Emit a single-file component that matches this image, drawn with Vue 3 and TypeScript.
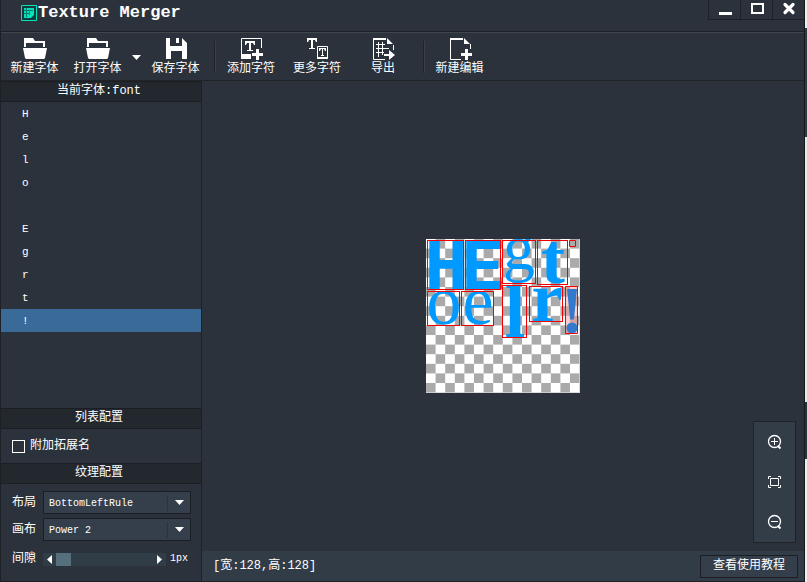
<script setup lang="ts">
import { ref } from 'vue'

interface Glyph {
  char: string
  face: string
  x: number
  y: number
  w: number
  h: number
  tx: number
  ty: number
  size: number
}

const glyphList: string[] = ['H', 'e', 'l', 'o', ' ', 'E', 'g', 'r', 't', '!']
const selected = ref(9)
const extension = ref(false)
const layout = ref('BottomLeftRule')
const canvas = ref('Power 2')
const gap = ref(1)

/* Packed glyph rectangles on the texture, in texture-view units */
const glyphs: Glyph[] = [
  { char: 'H', face: 'mono', x: 1, y: 1, w: 37, h: 50, tx: 20, ty: 50, size: 72 },
  { char: 'E', face: 'mono', x: 39, y: 1, w: 36, h: 50, tx: 57, ty: 50, size: 72 },
  { char: 'g', face: 'serif', x: 76, y: 1, w: 34, h: 44, tx: 93, ty: 30, size: 64 },
  { char: 't', face: 'bold', x: 111, y: 1, w: 31, h: 45, tx: 127, ty: 44, size: 72 },
  { char: 'o', face: 'serif', x: 1, y: 52, w: 33, h: 35, tx: 18, ty: 85, size: 70 },
  { char: 'e', face: 'serif', x: 35, y: 52, w: 33, h: 35, tx: 52, ty: 85, size: 70 },
  { char: 'l', face: 'bold', x: 76, y: 46, w: 25, h: 53, tx: 89, ty: 98, size: 74 },
  { char: 'r', face: 'bold', x: 103, y: 47, w: 34, h: 36, tx: 121, ty: 82, size: 70 },
]
</script>

<template>
  <div class="screen">
    <div class="window">
      <header class="titlebar">
        <svg class="logo" width="16" height="16" viewBox="0 0 16 16" aria-hidden="true">
          <path d="M.5.5h15v15H.5z" fill="#123b3c" stroke="#00e1bc" />
          <path d="M3 3h10v7l-3 3H3z" fill="#00e1bc" />
          <path d="M3 5.5h9M3 8.500h6M5.500 3v9M8.500 5v5" stroke="#087a70" fill="none" />
        </svg>
        <h1>Texture Merger</h1>
        <div class="window-buttons">
          <button type="button" aria-label="最小化">
            <svg width="14" height="14" viewBox="0 0 14 14"><path d="M1 11h13v3H1z" fill="#fff" /></svg>
          </button>
          <button type="button" aria-label="最大化">
            <svg width="14" height="14" viewBox="0 0 14 14"><path d="M2 3h11v9H2z" fill="none" stroke="#fff" stroke-width="2" /></svg>
          </button>
          <button type="button" aria-label="关闭">
            <svg width="14" height="14" viewBox="0 0 14 14"><path d="M3 3.500l8 8M11 3.500l-8 8" stroke="#fff" stroke-width="3.200" stroke-linecap="round" /></svg>
          </button>
        </div>
      </header>

      <nav class="toolbar">
        <button type="button" class="tool">
          <svg width="24" height="24" viewBox="0 0 24 24"><path d="M1 10V1h9l2 3h10v6h-2V6H3v4z" fill="#fff" /><path d="M0 11h24l-2 10-1 1H3l-1-1z" fill="#fff" /></svg>
          <span>新建字体</span>
        </button>
        <button type="button" class="tool">
          <svg width="24" height="24" viewBox="0 0 24 24"><path d="M1 10V1h9l2 3h10v6h-2V6H3v4z" fill="#fff" /><path d="M0 11h24l-2 10-1 1H3l-1-1z" fill="#fff" /></svg>
          <span>打开字体</span>
        </button>
        <button type="button" class="more" aria-label="最近打开">
          <svg width="9" height="5" viewBox="0 0 9 5"><path d="M0 0h9L4.500 5z" fill="#fff" /></svg>
        </button>
        <button type="button" class="tool">
          <svg width="24" height="24" viewBox="0 0 24 24"><path d="M2 1h4v8h12V1l5 5v16h-5v-8H7v8H2zM12 1h3v5h-3z" fill="#fff" /></svg>
          <span>保存字体</span>
        </button>
        <i class="divider"></i>
        <button type="button" class="tool wide">
          <svg width="24" height="24" viewBox="0 0 24 24"><path d="M2.500 17V1.500h20V11" fill="none" stroke="#fff" /><path d="M2 17h10v5H2zM6 4h10v4h-1l-1-2h-2v7h2v1H8v-1h2V6H8L7 8H6zM17 12h3v4h4v3h-4v4h-3v-4h-4v-3h4z" fill="#fff" /></svg>
          <span>添加字符</span>
        </button>
        <button type="button" class="tool wide">
          <svg width="24" height="24" viewBox="0 0 24 24"><path d="M2 1h10v4h-1l-1-2H8v8h2v1H4v-1h2V3H4L3 5H2z" fill="#fff" /><path d="M12.500 9.500h10v12h-10z" fill="none" stroke="#fff" /><path d="M12 20h11v2H12zM14 11h7v3h-1l-1-2h-1v6h1v1h-3v-1h1v-6h-1l-1 2h-1z" fill="#fff" /></svg>
          <span>更多字符</span>
        </button>
        <button type="button" class="tool wide">
          <svg width="24" height="24" viewBox="0 0 24 24"><path d="M14 22.500H2.500V1.500H15M22.500 8v5M5 7.500h9M5 11.500h13M5 15.500h8M7.500 5v15M11.500 5v13" fill="none" stroke="#fff" /><path d="M2 1h13v2H2zM16 1l6 6h-6zM13 17h5v-4l6 5-6 5v-4h-5z" fill="#fff" /></svg>
          <span>导出</span>
        </button>
        <i class="divider"></i>
        <button type="button" class="tool last">
          <svg width="24" height="24" viewBox="0 0 24 24"><path d="M13 22.500H2.500V1.500H15M22.500 7v5" fill="none" stroke="#fff" /><path d="M2 1h13v2H2zM16 1l6 6h-6zM17 12h3v4h4v3h-4v4h-3v-4h-4v-3h4z" fill="#fff" /></svg>
          <span>新建编辑</span>
        </button>
      </nav>

      <div class="body">
        <aside class="sidebar">
          <h2>当前字体:font</h2>
          <ul class="glyph-list">
            <li v-for="(char, i) in glyphList" :key="i">
              <button type="button" :class="{ active: selected === i }" @click="selected = i">{{ char }}</button>
            </li>
          </ul>
          <h2>列表配置</h2>
          <div class="list-config">
            <label class="check"><input v-model="extension" type="checkbox" />附加拓展名</label>
          </div>
          <h2>纹理配置</h2>
          <div class="texture-config">
            <div class="field">
              <label for="layout">布局</label>
              <div class="select">
                <select id="layout" v-model="layout">
                  <option>BottomLeftRule</option>
                </select>
                <svg width="9" height="5" viewBox="0 0 9 5"><path d="M0 0h9L4.500 5z" fill="#fff" /></svg>
              </div>
            </div>
            <div class="field">
              <label for="canvas">画布</label>
              <div class="select">
                <select id="canvas" v-model="canvas">
                  <option>Power 2</option>
                </select>
                <svg width="9" height="5" viewBox="0 0 9 5"><path d="M0 0h9L4.500 5z" fill="#fff" /></svg>
              </div>
            </div>
            <div class="field gap">
              <label for="gap">间隙</label>
              <div class="slider">
                <svg width="5" height="9" viewBox="0 0 5 9"><path d="M5 0v9L0 4.500z" fill="#fff" /></svg>
                <input id="gap" v-model.number="gap" type="range" min="1" max="10" />
                <svg width="5" height="9" viewBox="0 0 5 9"><path d="M0 0v9l5-4.500z" fill="#fff" /></svg>
              </div>
              <output for="gap">{{ gap }}px</output>
            </div>
          </div>
        </aside>

        <main class="workspace">
          <div class="stage">
            <svg class="texture" width="154" height="154" viewBox="0 0 154 154">
              <defs>
                <pattern id="checker" width="19.200" height="19.200" patternUnits="userSpaceOnUse">
                  <path d="M0 0h19.200v19.200H0z" fill="#fff" />
                  <path d="M9.600 0h9.600v9.600H9.600zM0 9.600h9.600v9.600H0z" fill="#aaa" />
                </pattern>
              </defs>
              <path d="M0 0h154v154H0z" fill="url(#checker)" />
              <g fill="#0099ff" text-anchor="middle">
                <text v-for="g in glyphs" :key="g.char" :class="g.face" :x="g.tx" :y="g.ty" :font-size="g.size">{{ g.char }}</text>
              </g>
              <path d="M139 47h13v48h-13z" fill="#ff9a9a" fill-opacity=".5" />
              <text class="bold" x="146" y="94" font-size="68" text-anchor="middle" fill="#337acc">!</text>
              <g fill="none" stroke="#f00000">
                <rect v-for="g in glyphs" :key="g.char" :x="g.x + 0.5" :y="g.y + 0.5" :width="g.w - 1" :height="g.h - 1" />
                <path d="M139.500 47.500h12v47h-12zM143.500 1.500h6v6h-6z" />
              </g>
            </svg>
            <div class="zoom-panel">
              <button type="button" aria-label="放大">
                <svg width="16" height="16" viewBox="0 0 16 16" fill="none" stroke="#fff"><circle cx="7.500" cy="7.500" r="6" stroke-width="1.300" /><path d="M4 7.500h7M7.500 4v7" /><path d="M11 12l2.500 2.500" stroke-width="2" /></svg>
              </button>
              <button type="button" aria-label="适应窗口">
                <svg width="16" height="16" viewBox="0 0 16 16" fill="none" stroke="#fff"><path d="M3.500 4.500h8v7h-8zM1.500 5V2.500H4M11 2.500h2.500V5M13.500 11v2.500H11M4 13.500H1.500V11" /></svg>
              </button>
              <button type="button" aria-label="缩小">
                <svg width="16" height="16" viewBox="0 0 16 16" fill="none" stroke="#fff"><circle cx="7.500" cy="7.500" r="6" stroke-width="1.300" /><path d="M4 7.500h7" /><path d="M11 12l2.500 2.500" stroke-width="2" /></svg>
              </button>
            </div>
          </div>
          <footer class="status">
            <span>[宽:128,高:128]</span>
            <button type="button">查看使用教程</button>
          </footer>
        </main>
      </div>
    </div>
    <div class="behind" aria-hidden="true"></div>
  </div>
</template>

<style>
body {
  margin: 0;
  background: #1b1f23;
}
</style>

<style scoped>
.screen {
  display: flex;
  height: 100vh;
  overflow: hidden;
  color: #fff;
  font-family: "Liberation Mono", "Noto Sans CJK SC", monospace;
  font-size: 12px;
  line-height: 18px;
}
.screen * {
  box-sizing: border-box;
}
button,
select,
input {
  margin: 0;
  padding: 0;
  border: 0;
  border-radius: 0;
  background: none;
  color: inherit;
  font: inherit;
}
svg {
  display: block;
  flex: none;
}
.window {
  display: flex;
  flex: 1;
  flex-direction: column;
  min-width: 0;
  border-right: 1px solid #161b20;
  border-left: 1px solid #1d2126;
  border-bottom: 1px solid #1d2126;
  background: #2b323b;
}
.behind {
  width: 2px;
  background: linear-gradient(#eee 0 28px, #303a42 28px 137px, #e8e8e8 137px 402px, #2b323b 402px 459px, #eee 459px);
}
.titlebar {
  display: flex;
  align-items: flex-start;
  height: 32px;
  border-bottom: 1px solid #1d2024;
}
.logo {
  margin: 5px 1px 0 20px;
}
h1 {
  flex: 1;
  margin: 0;
  padding-top: 3px;
  font-size: 17px;
  line-height: 20px;
}
.window-buttons {
  display: flex;
}
.window-buttons button {
  display: flex;
  justify-content: center;
  width: 32px;
  height: 20px;
  padding-top: 1px;
  border-bottom: 1px solid #1d2024;
  border-left: 1px solid #1d2024;
}
.toolbar {
  display: flex;
  flex: none;
  align-items: flex-start;
  height: 49px;
  padding: 4px 0 0 2px;
  border-top: 1px solid #41464b;
  border-bottom: 1px solid #212327;
}
.tool {
  display: flex;
  flex-direction: column;
  align-items: center;
  width: 63px;
  line-height: 16px;
}
.tool.wide {
  width: 66px;
}
.more {
  width: 15px;
  height: 40px;
  padding: 0 3px;
}
.divider {
  width: 2px;
  height: 32px;
  margin: 4px 2px 0 7px;
  border-left: 1px solid #1f2226;
  border-right: 1px solid #3c3f43;
}
.tool.last {
  margin-left: 1px;
}
.body {
  display: flex;
  flex: 1;
  min-height: 0;
}
.sidebar {
  display: flex;
  flex: none;
  flex-direction: column;
  width: 201px;
  border-right: 1px solid #1d2126;
}
h2 {
  flex: none;
  margin: 0;
  padding-right: 4px;
  border-top: 1px solid #1b1e22;
  border-bottom: 1px solid #1b1e22;
  background: #23282e;
  font-size: 12px;
  font-weight: 400;
  line-height: 19px;
  text-align: center;
}
.glyph-list {
  flex: 1;
  min-height: 0;
  margin: 0;
  padding: 0;
  overflow: hidden;
  list-style: none;
}
.glyph-list button {
  display: block;
  width: 100%;
  height: 23px;
  padding-left: 21px;
  font-size: 11px;
  line-height: 22px;
  text-align: left;
}
.glyph-list .active {
  background: #3a6a97;
}
.list-config {
  padding: 8px 11px;
}
.check {
  display: flex;
  gap: 5px;
  align-items: center;
}
.check input {
  width: 13px;
  height: 13px;
  border: 1px solid #fff;
  appearance: none;
}
.check input:checked {
  background: #3a6a97;
}
.texture-config {
  display: flex;
  flex-direction: column;
  gap: 4px;
  padding: 7px 10px 8px 11px;
}
.field {
  display: flex;
  align-items: center;
  height: 23px;
}
.field label {
  width: 31px;
}
.select {
  display: flex;
  flex: 1;
  align-items: center;
  height: 23px;
  padding-right: 6px;
  border: 1px solid #1b1f24;
  background: #353f4b;
}
.select select {
  flex: 1;
  min-width: 0;
  height: 16px;
  margin-right: 7px;
  padding-left: 5px;
  border-right: 1px solid #2b323b;
  appearance: none;
  font-size: 10px;
}
.field.gap {
  height: 28px;
}
.slider {
  display: flex;
  align-items: center;
  width: 123px;
  height: 13px;
  padding: 0 4px;
  background: #303c46;
}
.slider input {
  flex: 1;
  min-width: 0;
  height: 13px;
  margin: 0 4px;
  appearance: none;
}
.slider input::-webkit-slider-thumb {
  width: 15px;
  height: 13px;
  appearance: none;
  background: #566f7c;
}
.field output {
  margin-left: 4px;
  font-size: 10px;
}
.workspace {
  display: flex;
  flex: 1;
  flex-direction: column;
  min-width: 0;
}
.stage {
  position: relative;
  display: flex;
  flex: 1;
  align-items: center;
  justify-content: center;
}
.texture .mono {
  font-family: "Liberation Mono", monospace;
  font-weight: 700;
}
.texture .serif {
  font-family: "Liberation Serif", serif;
}
.texture .bold {
  font-family: "Liberation Serif", serif;
  font-weight: 700;
}
.zoom-panel {
  position: absolute;
  right: 8px;
  bottom: 8px;
  display: flex;
  flex-direction: column;
  width: 43px;
  border: 1px solid #1f2226;
  background: #323d48;
}
.zoom-panel button {
  display: flex;
  align-items: center;
  justify-content: center;
  height: 40px;
}
.status {
  display: flex;
  flex: none;
  align-items: center;
  justify-content: space-between;
  height: 30px;
  padding: 0 6px 0 11px;
  background: #313c47;
}
.status button {
  width: 98px;
  height: 23px;
  border: 1px solid #1b1f24;
  background: #353f4b;
}
.status span {
  font-size: 12px;
}
</style>
